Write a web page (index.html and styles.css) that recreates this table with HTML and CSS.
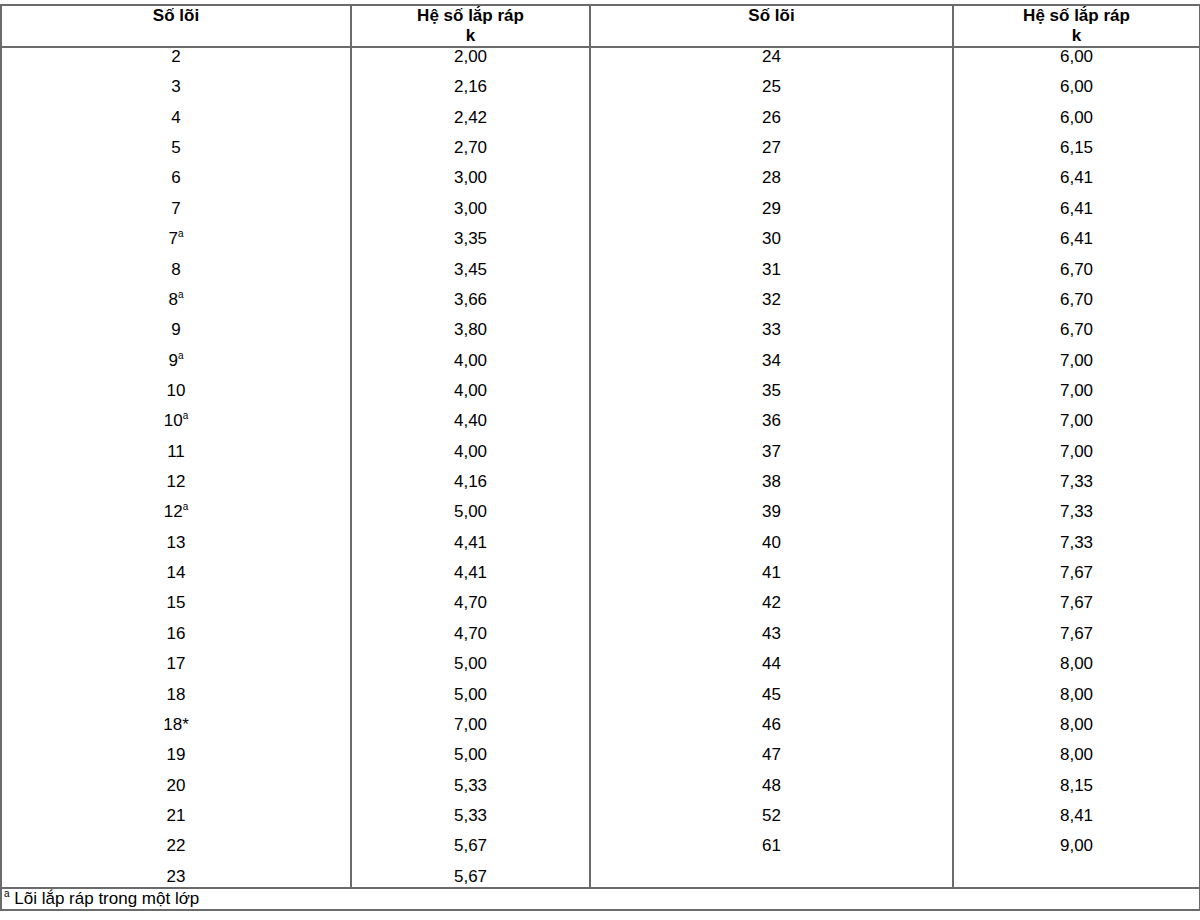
FILE: index.html
```html
<!DOCTYPE html>
<html lang="vi">
<head>
<meta charset="utf-8">
<title>Hệ số lắp ráp</title>
<link rel="stylesheet" href="styles.css">
</head>
<body>
<table class="tbl">
  <colgroup>
    <col class="c1"><col class="c2"><col class="c3"><col class="c4">
  </colgroup>
  <thead>
    <tr class="hd">
      <th>Số lõi</th>
      <th>Hệ số lắp ráp<br>k</th>
      <th>Số lõi</th>
      <th>Hệ số lắp ráp<br>k</th>
    </tr>
  </thead>
  <tbody>
    <tr class="r"><td>2</td><td>2,00</td><td>24</td><td>6,00</td></tr>
    <tr class="r"><td>3</td><td>2,16</td><td>25</td><td>6,00</td></tr>
    <tr class="r"><td>4</td><td>2,42</td><td>26</td><td>6,00</td></tr>
    <tr class="r"><td>5</td><td>2,70</td><td>27</td><td>6,15</td></tr>
    <tr class="r"><td>6</td><td>3,00</td><td>28</td><td>6,41</td></tr>
    <tr class="r"><td>7</td><td>3,00</td><td>29</td><td>6,41</td></tr>
    <tr class="r"><td>7<sup class="s">a</sup></td><td>3,35</td><td>30</td><td>6,41</td></tr>
    <tr class="r"><td>8</td><td>3,45</td><td>31</td><td>6,70</td></tr>
    <tr class="r"><td>8<sup class="s">a</sup></td><td>3,66</td><td>32</td><td>6,70</td></tr>
    <tr class="r"><td>9</td><td>3,80</td><td>33</td><td>6,70</td></tr>
    <tr class="r"><td>9<sup class="s">a</sup></td><td>4,00</td><td>34</td><td>7,00</td></tr>
    <tr class="r"><td>10</td><td>4,00</td><td>35</td><td>7,00</td></tr>
    <tr class="r"><td>10<sup class="s">a</sup></td><td>4,40</td><td>36</td><td>7,00</td></tr>
    <tr class="r"><td>11</td><td>4,00</td><td>37</td><td>7,00</td></tr>
    <tr class="r"><td>12</td><td>4,16</td><td>38</td><td>7,33</td></tr>
    <tr class="r"><td>12<sup class="s">a</sup></td><td>5,00</td><td>39</td><td>7,33</td></tr>
    <tr class="r"><td>13</td><td>4,41</td><td>40</td><td>7,33</td></tr>
    <tr class="r"><td>14</td><td>4,41</td><td>41</td><td>7,67</td></tr>
    <tr class="r"><td>15</td><td>4,70</td><td>42</td><td>7,67</td></tr>
    <tr class="r"><td>16</td><td>4,70</td><td>43</td><td>7,67</td></tr>
    <tr class="r"><td>17</td><td>5,00</td><td>44</td><td>8,00</td></tr>
    <tr class="r"><td>18</td><td>5,00</td><td>45</td><td>8,00</td></tr>
    <tr class="r"><td>18*</td><td>7,00</td><td>46</td><td>8,00</td></tr>
    <tr class="r"><td>19</td><td>5,00</td><td>47</td><td>8,00</td></tr>
    <tr class="r"><td>20</td><td>5,33</td><td>48</td><td>8,15</td></tr>
    <tr class="r"><td>21</td><td>5,33</td><td>52</td><td>8,41</td></tr>
    <tr class="r"><td>22</td><td>5,67</td><td>61</td><td>9,00</td></tr>
    <tr class="r last"><td>23</td><td>5,67</td><td></td><td></td></tr>
  </tbody>
  <tfoot>
    <tr class="ft">
      <td colspan="4"><sup class="fs">a</sup> Lõi lắp ráp trong một lớp</td>
    </tr>
  </tfoot>
</table>
</body>
</html>
```

FILE: styles.css
```css
html, body {
  margin: 0;
  padding: 0;
  background: #ffffff;
}

body {
  font-family: "Liberation Sans", Arial, sans-serif;
  font-size: 17px;
  color: #000000;
}

.tbl {
  margin-top: 4px;
  width: 1199px;
  table-layout: fixed;
  border-collapse: collapse;
  border: 2px solid #6b6b6b;
}

.c1 { width: 350px; }
.c2 { width: 239px; }
.c3 { width: 363px; }
.c4 { width: 247px; }

.hd th {
  height: 40px;
  padding: 0;
  font-weight: bold;
  line-height: 20px;
  text-align: center;
  vertical-align: top;
  border: 2px solid #6b6b6b;
}

.r td {
  height: 30.37px;
  padding: 0;
  line-height: 18px;
  text-align: center;
  vertical-align: top;
  border-left: 2px solid #6b6b6b;
  border-right: 2px solid #6b6b6b;
}

.r.last td {
  height: 19px;
}

.s {
  font-size: 10px;
  line-height: 0;
  vertical-align: 7px;
}

.ft td {
  height: 20px;
  padding: 0 0 0 2px;
  line-height: 20px;
  text-align: left;
  vertical-align: top;
  border-top: 2px solid #6b6b6b;
}

.fs {
  font-size: 10px;
  line-height: 0;
  vertical-align: 7px;
}
```
